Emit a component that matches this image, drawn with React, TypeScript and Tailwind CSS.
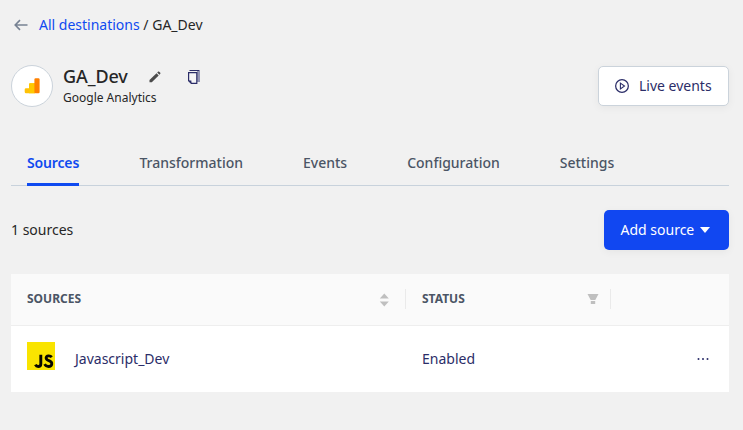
import React from 'react';

function BackArrow() {
  return (
    <svg className="h-[12px] w-[14px] shrink-0" viewBox="0 0 14 12" fill="none" stroke="#778293" strokeWidth="1.6">
      <path d="M13.5 6H1.2M6 1.1L1.2 6L6 10.9" />
    </svg>
  );
}

function AnalyticsLogo() {
  return (
    <svg className="h-[16px] w-[16px]" viewBox="0 0 16 16">
      <path d="M2 10.3H5V6.6Q5 5.3 6.3 5.3H11V15.3H2Q.7 15.3.7 13.8V11.6Q.7 10.3 2 10.3Z" fill="#ffc107" />
      <path d="M6.3 5.3H11V15.3H5V6.6Q5 5.3 6.3 5.3Z" fill="#ffc800" />
      <rect x="10.4" y=".2" width="5.2" height="15.1" rx="1.2" fill="#ff8000" />
    </svg>
  );
}

function Pencil() {
  return (
    <svg className="h-[12px] w-[12px]" viewBox="0 0 12 12" fill="#4b4b4b">
      <path d="M.5 11.3V9L7.5 2.2L9.7 4.4L2.8 11.3Z" />
      <path d="M8.2 1.5L9.2.6Q9.7.2 10.2.7L11.3 1.8Q11.7 2.3 11.3 2.8L10.4 3.7Z" />
    </svg>
  );
}

function CopyPages() {
  return (
    <svg className="h-[14px] w-[12px]" viewBox="0 0 12 14">
      <path d="M9 1H12V12H9Z" fill="#9496b5" />
      <path d="M1.5 .5H11.5" fill="none" stroke="#2b2d68" strokeWidth="1" />
      <path d="M.6 2.6H8.8V13.3H3.3L.6 10.8Z" fill="#f5f5f7" stroke="#2b2d68" strokeWidth="1.2" />
      <path d="M.6 10.6H3.4V13.3Z" fill="#2b2d68" />
    </svg>
  );
}

function PlayCircle() {
  return (
    <svg className="h-[14px] w-[14px]" viewBox="0 0 14 14" fill="none" stroke="#2b2d68">
      <circle cx="7" cy="7" r="6.35" strokeWidth="1.25" />
      <path d="M5.4 4.1L9.5 7L5.4 9.9Z" strokeWidth="1.1" />
    </svg>
  );
}

const tabs = [
  { label: 'Sources', active: true },
  { label: 'Transformation', active: false },
  { label: 'Events', active: false },
  { label: 'Configuration', active: false },
  { label: 'Settings', active: false },
];

export default function App() {
  return (
    <div className="flex h-[430px] w-[743px] flex-col overflow-hidden bg-[#f1f1f1] pr-[14px] pl-[11px] font-['Noto_Sans',sans-serif] text-sm text-[#262626]">
      <nav className="mt-[14px] flex h-[22px] items-center pl-[3px] leading-[22px]">
        <BackArrow />
        <a className="ml-[11px] text-[#0f4af0]">All destinations</a>
        <span className="whitespace-pre"> / GA_Dev</span>
      </nav>

      <header className="mt-[28px] flex h-[44px] items-center justify-between">
        <div className="flex items-center">
          <div className="flex h-[42px] w-[42px] items-center justify-center rounded-full border border-[#cbd3db] bg-white">
            <AnalyticsLogo />
          </div>
          <div className="ml-[10px] flex flex-col">
            <div className="flex h-6 items-center">
              <h1 className="w-[86px] pb-[2px] text-[18px] leading-[22px] font-medium tracking-[-0.1px]">GA_Dev</h1>
              <Pencil />
              <div className="ml-[27px]">
                <CopyPages />
              </div>
            </div>
            <p className="h-[18px] text-xs leading-[18px]">Google Analytics</p>
          </div>
        </div>
        <button className="flex h-10 w-[131px] items-center rounded-[5px] border border-[#cbd3db] bg-white pl-4 text-[#2b2d68] shadow-[0_2px_8px_rgba(0,0,0,0.05)]">
          <PlayCircle />
          <span className="ml-[10px]">Live events</span>
        </button>
      </header>

      <div className="mt-[32px] flex h-[46px] gap-[60px] border-b border-[#c8d2dc] pl-4">
        {tabs.map((tab) => (
          <div
            key={tab.label}
            className={
              tab.active
                ? 'h-[46px] w-[52.4px] border-b-3 border-[#0f4af0] pt-[12px] font-semibold leading-[22px] tracking-[-0.15px] text-[#0f4af0]'
                : 'pt-[12px] font-medium leading-[22px] text-[#4b5565]'
            }
          >
            {tab.label}
          </div>
        ))}
      </div>

      <div className="mt-[24px] flex h-10 items-center justify-between">
        <span>1 sources</span>
        <button className="flex h-10 w-[125px] items-center rounded-[5px] bg-[#1147f1] pl-[16.5px] text-white shadow-[0_2px_8px_rgba(0,0,0,0.05)]">
          Add source
          <svg className="ml-[5.5px] h-[6px] w-[10px]" viewBox="0 0 10 6" fill="white">
            <path d="M0 0H10L5 6Z" />
          </svg>
        </button>
      </div>

      <div className="mt-[24px] bg-white">
        <div className="grid h-[52px] grid-cols-[395px_205px_118px] items-center border-b border-[#eeeeee] bg-[#fafafa] pb-[2px] text-xs font-bold text-[#4b5565]">
          <div className="flex h-5 items-center justify-between border-r border-[#eaeaea] pr-[16px] pl-4">
            SOURCES
            <svg className="mt-[2px] h-[14px] w-[10px]" viewBox="0 0 10 14" fill="#bfbfbf">
              <path d="M5.3 .5L9.8 5.5H.8ZM5.3 13.5L.8 8.5H9.8Z" />
            </svg>
          </div>
          <div className="flex h-5 items-center justify-between border-r border-[#eaeaea] pr-[11px] pl-4">
            STATUS
            <svg className="h-[10px] w-[12px]" viewBox="0 0 12 10" fill="#bfbfbf">
              <path d="M.5 0H11.5L8.3 6H3.7ZM3.8 7H8.2V10H3.8Z" />
            </svg>
          </div>
        </div>
        <div className="grid h-[66px] grid-cols-[395px_205px_118px] items-center text-[#2b2d68]">
          <div className="flex items-center pl-4">
            <svg className="mb-[6px] h-[28px] w-[28px]" viewBox="0 0 28 28">
              <rect width="28" height="28" fill="#f9e400" />
              <path d="M13.8 12.7V22Q13.8 24.5 11.2 24.5Q9.3 24.5 8.4 22.7" fill="none" stroke="#080800" strokeWidth="2.9" />
              <path d="M24.8 15.1Q23.5 13.6 21.4 13.8C18.5 14.1 18.4 17.1 20.9 18.2L22.5 18.9C26 20.4 25.3 24.5 21.6 24.5Q18.8 24.5 17.6 22.2" fill="none" stroke="#080800" strokeWidth="2.8" />
            </svg>
            <span className="ml-[20px]">Javascript_Dev</span>
          </div>
          <div className="pl-4">Enabled</div>
          <div className="flex justify-end pr-[20px]">
            <svg className="h-[2px] w-[12px]" viewBox="0 0 12 2" fill="#2b2d68">
              <circle cx="1.5" cy="1" r="1" />
              <circle cx="6" cy="1" r="1" />
              <circle cx="10.5" cy="1" r="1" />
            </svg>
          </div>
        </div>
      </div>
    </div>
  );
}
